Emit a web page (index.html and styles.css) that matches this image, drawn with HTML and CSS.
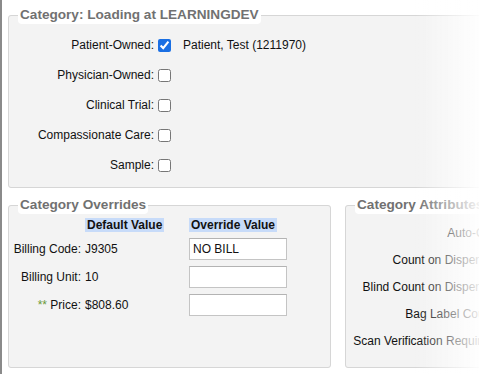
FILE: index.html
```html
<!DOCTYPE html>
<html lang="en">
<head>
    <meta charset="UTF-8">
    <meta name="viewport" content="width=device-width, initial-scale=1.0">
    <title>Category</title>
    <link rel="stylesheet" href="styles.css">
</head>
<body>
    <div class="page">
        <fieldset class="box box-category">
            <legend>Category: Loading at LEARNINGDEV</legend>
            <div class="cat-row">
                <label>Patient-Owned:</label>
                <input type="checkbox" checked>
                <span class="owner">Patient, Test (1211970)</span>
            </div>
            <div class="cat-row">
                <label>Physician-Owned:</label>
                <input type="checkbox">
            </div>
            <div class="cat-row">
                <label>Clinical Trial:</label>
                <input type="checkbox">
            </div>
            <div class="cat-row">
                <label>Compassionate Care:</label>
                <input type="checkbox">
            </div>
            <div class="cat-row">
                <label>Sample:</label>
                <input type="checkbox">
            </div>
        </fieldset>

        <div class="lower">
            <fieldset class="box box-overrides">
                <legend>Category Overrides</legend>
                <div class="ovr-grid">
                    <span></span>
                    <span class="head"><b>Default Value</b></span>
                    <span class="head"><b>Override Value</b></span>

                    <label>Billing Code:</label>
                    <span>J9305</span>
                    <input type="text" value="NO BILL">

                    <label>Billing Unit:</label>
                    <span>10</span>
                    <input type="text">

                    <label><span class="stars">**</span> Price:</label>
                    <span>$808.60</span>
                    <input type="text">
                </div>
            </fieldset>

            <fieldset class="box box-attrs">
                <legend>Category Attributes</legend>
                <div class="attr-row"><label>Auto-Cnt:</label><input type="checkbox"></div>
                <div class="attr-row"><label>Count on Dispense:</label><input type="checkbox"></div>
                <div class="attr-row"><label>Blind Count on Dispense:</label><input type="checkbox"></div>
                <div class="attr-row"><label>Bag Label Count:</label><input type="checkbox"></div>
                <div class="attr-row"><label>Scan Verification Required:</label><input type="checkbox"></div>
            </fieldset>
        </div>
    </div>
    <div class="fade"></div>
</body>
</html>
```

FILE: styles.css
```css
html, body {
    margin: 0;
    padding: 0;
    background: #ffffff;
    height: 374px;
    overflow: hidden;
}

body {
    font-family: "Liberation Sans", Arial, sans-serif;
    font-size: 12px;
    color: #111;
}

.page {
    width: 620px;
    border-left: 2px solid #8a8a8a;
    padding: 6px 0 0 6px;
    min-height: 374px;
    box-sizing: border-box;
}

.box {
    margin: 0;
    padding: 0;
    border: 1px solid #d6d6d6;
    border-radius: 3px;
    background: #f3f3f3;
    min-width: 0;
}

.box legend {
    margin-left: 9px;
    padding: 1px 2px;
    background: #ffffff;
    border-radius: 4px;
    color: #717171;
    font-size: 13.6px;
    font-weight: bold;
    line-height: 16px;
}

/* category */
.box-category {
    padding: 6px 0 7px 0;
}

.cat-row {
    display: grid;
    grid-template-columns: 145px 13px auto;
    column-gap: 4px;
    align-items: center;
    height: 30px;
}

.cat-row label {
    text-align: right;
}

.cat-row input,
.attr-row input {
    width: 13px;
    height: 13px;
    margin: 0;
    accent-color: #1a6fe3;
}

.owner {
    margin-left: 8px;
}

/* lower part */
.lower {
    display: flex;
    gap: 14px;
    margin-top: 8px;
}

.box-overrides {
    width: 323px;
    box-sizing: border-box;
    flex: none;
    padding: 4px 0 0 0;
}

.ovr-grid {
    display: grid;
    grid-template-columns: 72px 100px 98px;
    column-gap: 4px;
    row-gap: 6px;
    align-items: center;
}

.ovr-grid label {
    text-align: right;
    white-space: nowrap;
}

.ovr-grid .head {
    line-height: 14px;
}

.ovr-grid .head b {
    background: #c7dbf9;
    padding: 0 2px;
}

.ovr-grid input {
    width: 98px;
    height: 22px;
    box-sizing: border-box;
    margin: 0;
    padding: 1px 3px;
    border: 1px solid #c4c4c4;
    border-top-color: #b3b3b3;
    background: #fff;
    font-family: "Liberation Sans", Arial, sans-serif;
    font-size: 12px;
    color: #111;
}

.stars {
    color: #6b9a3a;
}

.box-attrs {
    flex: 1;
    padding: 5px 0 13px 0;
}

.attr-row {
    display: grid;
    grid-template-columns: 152px 13px;
    column-gap: 4px;
    align-items: center;
    height: 27px;
}

.attr-row label {
    text-align: right;
    white-space: nowrap;
}

.fade {
    position: fixed;
    top: 0;
    right: 0;
    width: 64px;
    height: 100%;
    background: linear-gradient(to right, rgba(255, 255, 255, 0), rgba(255, 255, 255, 0.9));
}
```
